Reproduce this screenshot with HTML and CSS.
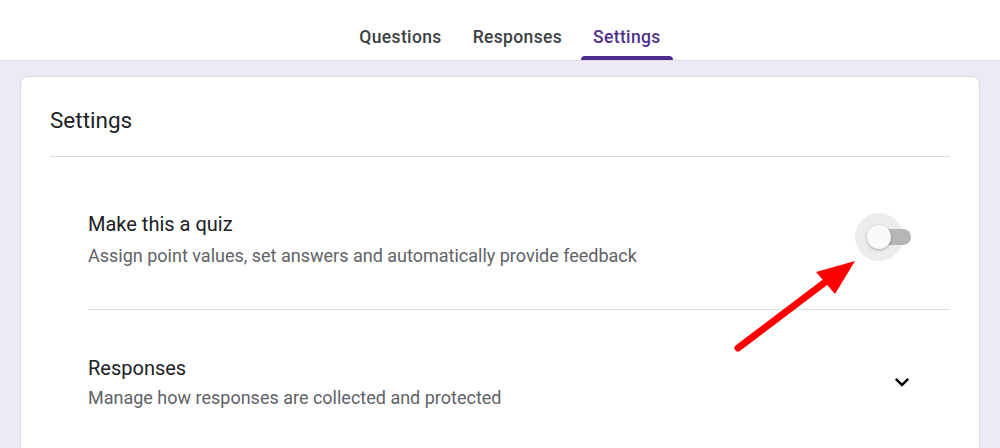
FILE: index.html
```html
<!DOCTYPE html>
<html>
<head>
<meta charset="utf-8">
<link rel="stylesheet" href="styles.css">
</head>
<body>
<header class="topbar">
  <nav class="tabs">
    <div class="tab"><span class="tab-label">Questions</span><span class="tab-ind"></span></div>
    <div class="tab"><span class="tab-label">Responses</span><span class="tab-ind"></span></div>
    <div class="tab active"><span class="tab-label">Settings</span><span class="tab-ind"></span></div>
  </nav>
</header>
<main class="main">
  <section class="card">
    <h1 class="card-title">Settings</h1>
    <div class="divider"></div>
    <div class="row quiz-row">
      <div class="row-text">
        <div class="row-title">Make this a quiz</div>
        <div class="row-sub quiz-sub">Assign point values, set answers and automatically provide feedback</div>
      </div>
      <div class="switch">
        <span class="halo"></span>
        <span class="track"></span>
        <span class="thumb"></span>
      </div>
    </div>
    <div class="divider inner"></div>
    <div class="row resp-row">
      <div class="row-text">
        <div class="row-title">Responses</div>
        <div class="row-sub">Manage how responses are collected and protected</div>
      </div>
      <svg class="chevron" viewBox="0 0 24 24" width="28" height="28"><path d="M16.59 8.59L12 13.17 7.41 8.59 6 10l6 6 6-6z" fill="#000"/></svg>
    </div>
  </section>
</main>
<svg class="arrow" width="1000" height="448" viewBox="0 0 1000 448">
  <line x1="738" y1="348" x2="828" y2="280" stroke="#ff0000" stroke-width="7" stroke-linecap="round"/>
  <polygon points="855,261 816,272 835,294" fill="#ff0000"/>
</svg>
</body>
</html>
```

FILE: styles.css
```css
html, body {
  margin: 0;
  padding: 0;
}
body {
  width: 1000px;
  height: 448px;
  overflow: hidden;
  background: #eee9f7;
  font-family: Roboto, "Liberation Sans", sans-serif;
  position: relative;
}
.topbar {
  background: #fff;
  height: 60px;
  border-bottom: 1px solid #dadce0;
  display: flex;
  justify-content: center;
  padding-left: 20px;
}
.tabs {
  display: flex;
  gap: 7px;
}
.tab {
  display: flex;
  flex-direction: column;
  align-items: center;
  height: 60px;
  box-sizing: border-box;
  padding: 25px 12px 0;
  font-size: 17.5px;
  font-weight: 500;
  letter-spacing: 0.35px;
  line-height: 24px;
  color: #3c4043;
}
.tab-ind {
  margin-top: auto;
  align-self: stretch;
  height: 4px;
  margin-left: -12px;
  margin-right: -12px;
  border-radius: 4px 4px 0 0;
}
.tab.active {
  color: #50318f;
}
.tab.active .tab-ind {
  background: #4d2c8c;
}
.main {
  padding: 15px 20px 0;
}
.card {
  background: #fff;
  border: 1px solid #dadce0;
  border-radius: 8px;
  padding: 0 29px;
  height: 420px;
}
.card-title {
  margin: 29px 0 0;
  font-size: 22.5px;
  font-weight: 400;
  line-height: 28px;
  color: #202124;
}
.divider {
  height: 1px;
  background: #dadce0;
  margin-top: 22px;
}
.divider.inner {
  margin-top: 0;
  margin-left: 38px;
}
.row {
  display: flex;
  align-items: center;
  padding-left: 38px;
}
.quiz-row {
  padding-top: 53px;
  padding-bottom: 41px;
}
.resp-row {
  padding-top: 44px;
}
.row-text {
  flex: 1;
}
.row-title {
  font-size: 20px;
  line-height: 28px;
  color: #202124;
}
.row-sub {
  font-size: 18px;
  line-height: 25px;
  color: #5f6368;
  margin-top: 3px;
}
.quiz-sub {
  margin-top: 5px;
}
.switch {
  position: relative;
  width: 56px;
  height: 48px;
  margin-right: 39px;
  margin-top: -4px;
}
.halo {
  position: absolute;
  left: 0;
  top: 0;
  width: 48px;
  height: 48px;
  border-radius: 50%;
  background: #ececec;
}
.track {
  position: absolute;
  left: 14px;
  top: 16px;
  width: 42px;
  height: 16px;
  border-radius: 8px;
  background: #b6b6b6;
}
.thumb {
  position: absolute;
  left: 12px;
  top: 12px;
  width: 24px;
  height: 24px;
  border-radius: 50%;
  background: #fafafa;
  box-shadow: 0 1px 3px rgba(0,0,0,0.3);
}
.chevron {
  display: block;
  margin-right: 34px;
  margin-top: 0;
}
.arrow {
  position: absolute;
  left: 0;
  top: 0;
  pointer-events: none;
}
```
